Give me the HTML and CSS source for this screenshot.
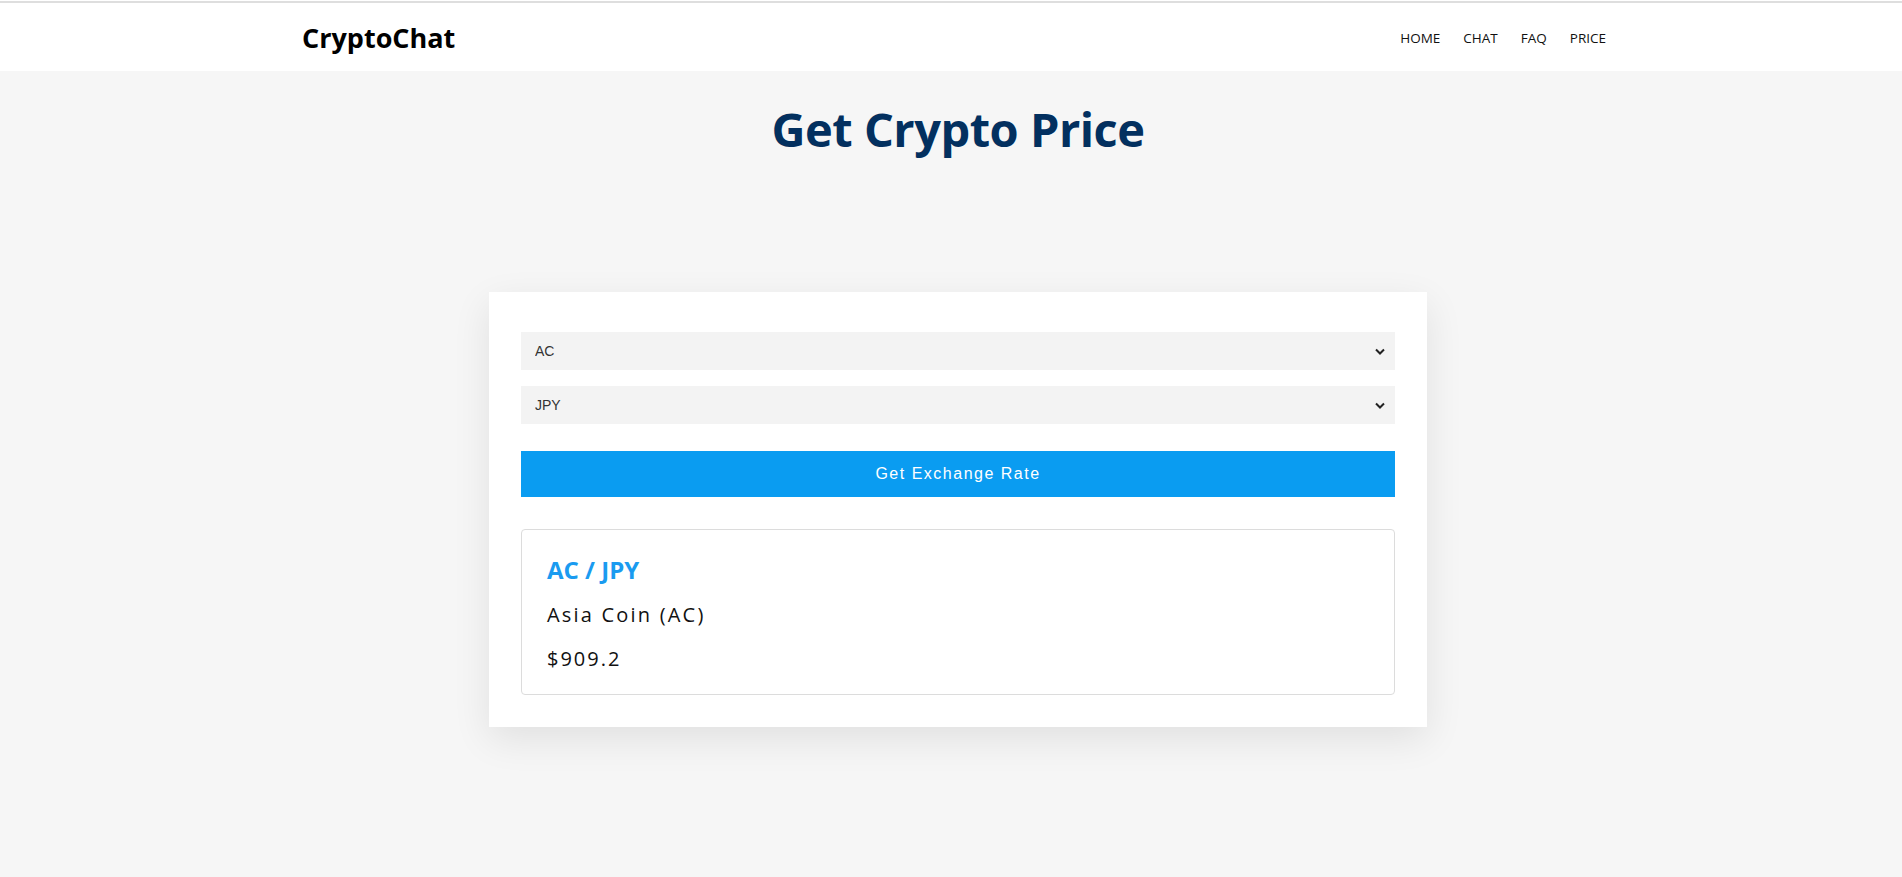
FILE: index.html
```html
<!DOCTYPE html>
<html lang="en">
<head>
<meta charset="utf-8">
<title>CryptoChat - Price</title>
<link rel="stylesheet" href="styles.css">
</head>
<body>
<header class="site-header">
  <div class="header-inner">
    <a class="logo" href="#">CryptoChat</a>
    <nav class="main-nav">
      <a href="#">HOME</a>
      <a href="#">CHAT</a>
      <a href="#">FAQ</a>
      <a href="#">PRICE</a>
    </nav>
  </div>
</header>
<main class="page">
  <h1 class="page-title">Get Crypto Price</h1>
  <section class="price-card">
    <select class="field">
      <option>AC</option>
    </select>
    <select class="field">
      <option>JPY</option>
    </select>
    <button class="btn-rate" type="button">Get Exchange Rate</button>
    <div class="result">
      <h2 class="result-pair">AC / JPY</h2>
      <p class="result-name">Asia Coin (AC)</p>
      <p class="result-price">$909.2</p>
    </div>
  </section>
</main>
</body>
</html>
```
FILE: styles.css
```css
* { box-sizing: border-box; }
html, body { margin: 0; padding: 0; }
body {
  background: #f6f6f6;
  font-family: "Open Sans", "Noto Sans", sans-serif;
  color: #111;
  height: 877px;
}
.site-header {
  background: #fff;
  box-shadow: inset 0 2px 0 #dedede;
  border-top: 1px solid #fff;
  height: 71px;
}
.header-inner {
  height: 100%;
  padding: 0 296px 0 302px;
  display: flex;
  align-items: center;
  justify-content: space-between;
}
.logo {
  font-size: 27px;
  font-weight: 700;
  color: #000;
  text-decoration: none;
  letter-spacing: 0;
  margin-top: 2px;
}
.main-nav {
  display: flex;
  gap: 23px;
  margin-top: 4px;
}
.main-nav a {
  font-size: 13.5px;
  color: #111;
  text-decoration: none;
}
.page {
  display: flex;
  flex-direction: column;
  align-items: center;
  padding-left: 14px;
}
.page-title {
  margin: 30px 0 0;
  font-size: 47px;
  line-height: 1.2;
  font-weight: 700;
  color: #03305f;
  letter-spacing: -0.5px;
}
.price-card {
  margin-top: 135px;
  width: 938px;
  background: #fff;
  padding: 40px 32px 32px;
  box-shadow: 0 12px 36px rgba(0, 0, 0, 0.09);
  display: flex;
  flex-direction: column;
}
.field {
  height: 38px;
  border: none;
  background-color: #f3f3f3;
  font-family: "Liberation Sans", Arial, sans-serif;
  font-size: 14px;
  color: #333;
  padding: 0 14px;
  appearance: none;
  -webkit-appearance: none;
  background-image: url("data:image/svg+xml,%3Csvg xmlns='http://www.w3.org/2000/svg' width='10' height='7' viewBox='0 0 10 7'%3E%3Cpath d='M1 1.5 L5 5.5 L9 1.5' fill='none' stroke='%23222' stroke-width='2'/%3E%3C/svg%3E");
  background-repeat: no-repeat;
  background-position: right 10px center;
  border-radius: 0;
  outline: none;
}
.field + .field { margin-top: 16px; }
.btn-rate {
  margin-top: 27px;
  height: 46px;
  border: none;
  background: #0a9cf1;
  color: #fff;
  font-family: "Liberation Sans", Arial, sans-serif;
  font-size: 16px;
  letter-spacing: 1.5px;
  cursor: pointer;
}
.result {
  margin-top: 32px;
  border: 1px solid #dcdcdc;
  border-radius: 4px;
  padding: 24px 25px 21px;
}
.result-pair {
  margin: 0;
  font-size: 24px;
  line-height: 1.3;
  font-weight: 700;
  color: #1a9bf0;
}
.result-name {
  margin: 15px 0 0;
  font-size: 20px;
  line-height: 1.4;
  letter-spacing: 2.2px;
  color: #111;
}
.result-price {
  margin: 16px 0 0;
  font-size: 20px;
  line-height: 1.4;
  letter-spacing: 2px;
  color: #111;
}
```
